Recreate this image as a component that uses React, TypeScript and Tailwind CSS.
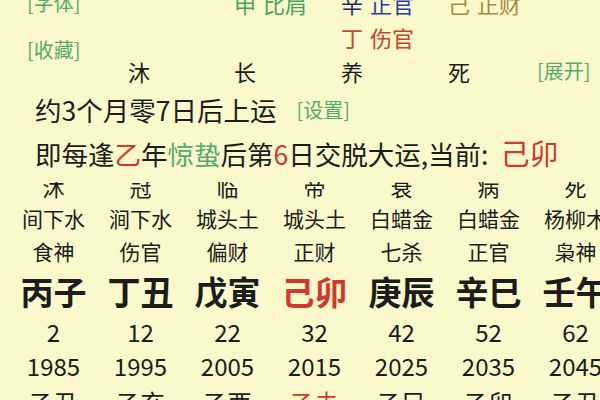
// Bazi chart – dayun (大运) panel
const font = { fontFamily: '"Noto Sans CJK SC", "Noto Sans", sans-serif' };

const cols = [
  { state: "沐", nayin: "间下水", god: "食神", pillar: "丙子", age: "2", year: "1985", liu: "乙丑" },
  { state: "冠", nayin: "涧下水", god: "伤官", pillar: "丁丑", age: "12", year: "1995", liu: "乙亥" },
  { state: "临", nayin: "城头土", god: "偏财", pillar: "戊寅", age: "22", year: "2005", liu: "乙酉" },
  { state: "帝", nayin: "城头土", god: "正财", pillar: "己卯", age: "32", year: "2015", liu: "乙未", current: true },
  { state: "衰", nayin: "白蜡金", god: "七杀", pillar: "庚辰", age: "42", year: "2025", liu: "乙巳" },
  { state: "病", nayin: "白蜡金", god: "正官", pillar: "辛巳", age: "52", year: "2035", liu: "乙卯" },
  { state: "死", nayin: "杨柳木", god: "枭神", pillar: "壬午", age: "62", year: "2045", liu: "乙丑" },
];

function Row({ children, className }: { children: React.ReactNode; className: string }) {
  return (
    <div className={`grid grid-cols-[repeat(7,87px)] pl-[10px] whitespace-nowrap text-center ${className}`}>
      {children}
    </div>
  );
}

export default function App() {
  return (
    <div
      style={font}
      className="w-[600px] h-[400px] overflow-hidden bg-[#fbf8cb] text-[#1c1c1c]"
    >
      {/* top: hidden stems + 长生 */}
      <div className="flex -mt-[14px] h-[103px]">
        <div className="w-[128px] pl-[27px] text-[20px] text-[#55ab6d]">
          <div className="mt-[3px] leading-[28px]">[字体]</div>
          <div className="mt-[19px] leading-[28px]">[收藏]</div>
        </div>

        <div className="grid grid-cols-[106px_107px_107px_89px] grid-rows-[34px_34px_34px] text-[22px] leading-[34px] whitespace-nowrap">
          <div />
          <div className="text-[#4aa55c]">
            申<span className="ml-[7px]">比肩</span>
          </div>
          <div>
            <span className="text-[#23296c]">辛</span>
            <span className="ml-[7px] text-[#2d3ea3]">正官</span>
          </div>
          <div className="text-[#a48b3e]">
            己<span className="ml-[7px]">正财</span>
          </div>

          <div />
          <div />
          <div className="text-[#c9432f]">
            丁<span className="ml-[7px]">伤官</span>
          </div>
          <div />

          <div>沐</div>
          <div>长</div>
          <div>养</div>
          <div>死</div>
        </div>

        <div className="mt-[71px] text-[20px] leading-[28px] text-[#55ab6d] whitespace-nowrap">[展开]</div>
      </div>

      {/* start of luck */}
      <div className="pl-[35px] text-[26.5px] leading-[42px] whitespace-nowrap">
        约3个月零7日后上运
        <span className="ml-[20px] text-[20px] text-[#55ab6d] align-top">[设置]</span>
      </div>
      <div className="pl-[35px] text-[26.5px] leading-[42px] whitespace-nowrap">
        即每逢<span className="text-[#d2392b]">乙</span>年<span className="text-[#55ab6d]">惊蛰</span>后第
        <span className="text-[#d2392b]">6</span>日交脱大运,当前:
        <span className="ml-[12px] text-[29px] text-[#d2392b]">己卯</span>
      </div>

      {/* dayun table */}
      <div className="mt-[7px] h-[17px] overflow-hidden">
        <Row className="-mt-[7px] text-[22px] leading-[22px]">
          {cols.map((c, i) => (
            <div key={i}>{c.state}</div>
          ))}
        </Row>
      </div>
      <Row className="text-[21px] leading-[38px]">
        {cols.map((c, i) => (
          <div key={i}>{c.nayin}</div>
        ))}
      </Row>
      <Row className="text-[21px] leading-[28px]">
        {cols.map((c, i) => (
          <div key={i}>{c.god}</div>
        ))}
      </Row>
      <Row className="text-[33px] leading-[52px] font-bold">
        {cols.map((c, i) => (
          <div key={i} className={c.current ? "text-[#d2392b]" : ""}>
            {c.pillar}
          </div>
        ))}
      </Row>
      <Row className="text-[24px] leading-[30px]">
        {cols.map((c, i) => (
          <div key={i}>{c.age}</div>
        ))}
      </Row>
      <Row className="text-[24px] leading-[38px]">
        {cols.map((c, i) => (
          <div key={i}>{c.year}</div>
        ))}
      </Row>
      <Row className="text-[24px] leading-[34px]">
        {cols.map((c, i) => (
          <div key={i} className={c.current ? "text-[#d2392b]" : ""}>
            {c.liu}
          </div>
        ))}
      </Row>
    </div>
  );
}
